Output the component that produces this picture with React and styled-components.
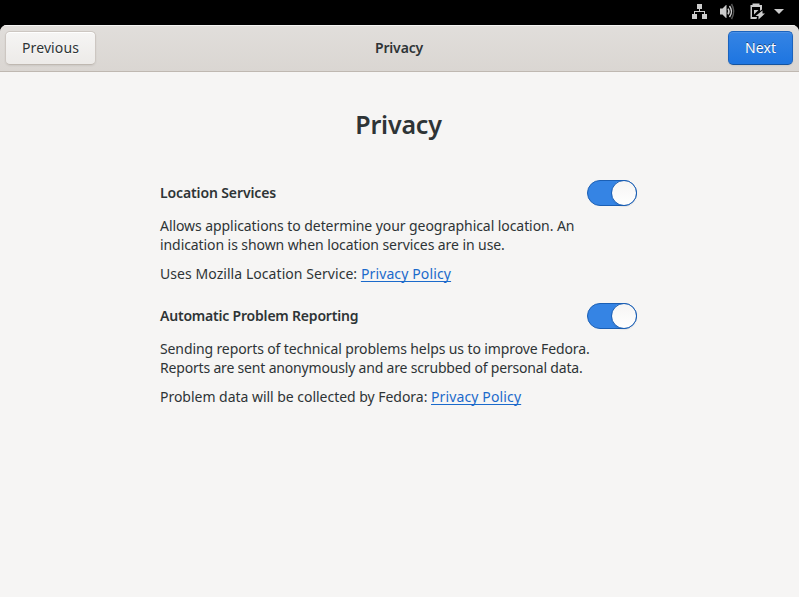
import React from 'react';
import styled, { createGlobalStyle } from 'styled-components';

const GlobalStyle = createGlobalStyle`
  * { box-sizing: border-box; }
  body {
    margin: 0;
    background: #000;
    color: #2e3436;
    font: 14px/19px "Noto Sans", "Open Sans", sans-serif;
  }
`;

const Screen = styled.div`
  display: flex;
  flex-direction: column;
  height: 597px;
  overflow: hidden;
`;

const TopBar = styled.div`
  display: flex;
  justify-content: flex-end;
  height: 25px;
  flex: none;
  background: #000;
`;

const StatusIcons = styled.svg`
  display: block;
  fill: #ccc;
`;

const Window = styled.main`
  flex: 1;
  display: flex;
  flex-direction: column;
  border-radius: 7px 7px 0 0;
  overflow: hidden;
  background: #f6f5f4;
`;

const HeaderBar = styled.header`
  display: grid;
  grid-template-columns: 1fr auto 1fr;
  align-items: center;
  height: 47px;
  padding: 0 6px 0 5px;
  border-bottom: 1px solid #bfb8b1;
  background: linear-gradient(to top, #dad6d2, #e1dedb);
  box-shadow: inset 0 1px #f5f4f3;
`;

const HeaderTitle = styled.div`
  padding-bottom: 2px;
  font-weight: 600;
  letter-spacing: -0.15px;
`;

const Button = styled.button`
  height: 34px;
  width: ${(p) => (p.$suggested ? 65 : 91)}px;
  justify-self: ${(p) => (p.$suggested ? 'end' : 'start')};
  padding: 0 0 2px;
  border: 1px solid ${(p) => (p.$suggested ? '#1b63bd' : '#cdc7c2')};
  border-bottom-color: ${(p) => (p.$suggested ? '#15539e' : '#bfb8b1')};
  border-radius: 5px;
  background: ${(p) =>
    p.$suggested
      ? 'linear-gradient(to top, #1f76e1 2px, #3584e4)'
      : 'linear-gradient(to top, #edebe9 2px, #f6f5f4)'};
  box-shadow: inset 0 1px ${(p) => (p.$suggested ? '#4b91e7' : '#fff')},
    0 1px 2px rgba(0, 0, 0, 0.07);
  color: ${(p) => (p.$suggested ? '#fff' : '#2e3436')};
  text-shadow: ${(p) =>
    p.$suggested ? '0 -1px rgba(0, 0, 0, 0.45)' : '0 1px rgba(255, 255, 255, 0.77)'};
  font: inherit;
  letter-spacing: 0.1px;
`;

const Content = styled.section`
  width: 477px;
  margin-left: 160px;
`;

const PageTitle = styled.h1`
  margin: 34px 0 0;
  font-size: 25px;
  line-height: 36px;
  font-weight: 600;
  letter-spacing: -0.2px;
  text-align: center;
`;

const Setting = styled.section`
  margin-top: ${(p) => p.$gap}px;
`;

const SettingHeader = styled.div`
  display: flex;
  align-items: center;
  justify-content: space-between;
  height: 26px;
`;

const SettingTitle = styled.h2`
  margin: 0;
  padding-bottom: 2px;
  font-size: 14px;
  font-weight: 600;
  letter-spacing: ${(p) => p.$tracking}px;
`;

const Description = styled.p`
  margin: 10px 0 0;
`;

const Line = styled.span`
  display: block;
  white-space: nowrap;
  letter-spacing: ${(p) => p.$tracking}px;
`;

const Note = styled.p`
  margin: 10px 0 0;
  letter-spacing: ${(p) => p.$tracking}px;
  white-space: nowrap;
`;

const Link = styled.a`
  color: #1b6acb;
  letter-spacing: 0.13px;
  text-decoration: underline;
  text-decoration-thickness: 1px;
  text-decoration-skip-ink: none;
  text-underline-offset: 2px;
`;

const Switch = styled.button`
  display: flex;
  justify-content: flex-end;
  width: 50px;
  height: 26px;
  padding: 0;
  border: 1px solid #1b5fb4;
  border-radius: 13px;
  background: #3584e4;
`;

const Knob = styled.span`
  width: 26px;
  height: 26px;
  margin: -1px -1px 0 0;
  border: 1px solid #1b5fb4;
  border-radius: 50%;
  background: linear-gradient(to bottom, #f6f5f4, #fff);
  box-shadow: 0 1px 1px rgba(0, 0, 0, 0.08);
`;

const Toggle = ({ label }) => (
  <Switch role="switch" aria-checked="true" aria-label={label}>
    <Knob />
  </Switch>
);

export default function App() {
  return (
    <Screen>
      <GlobalStyle />
      <TopBar>
        <StatusIcons width="111" height="25" viewBox="688 0 111 25" aria-hidden="true">
          <path d="M697 4h5v5h-2v2h5v3h2v5h-5v-5h2v-2h-9v2h2v5h-5v-5h2v-3h5V9h-2z" />
          <path d="M720 8.5h2.5L726 5h.5v13H726l-3.5-3.5H720z" />
          <g fill="none" stroke="#ccc" strokeWidth="1.5">
            <path d="M728 8.6q2 2.9 0 5.8" />
            <path d="M729.5 6q4 5.5 0 11" />
            <path d="M731.5 4q4.4 7.5 0 15" stroke="#555" />
          </g>
          <path d="M752.5 3.5h7V5h2.5v4.5l-2 1.5V7h-8v10h5l-.5 2h-6V5h2z" />
          <path d="M754 10h4.5l-4.5 4.5z" />
          <path d="M762.5 10.5V13.5h2.5L758.5 19.5v-3.5h-3z" />
          <path d="M774 9h10l-5 5z" />
        </StatusIcons>
      </TopBar>
      <Window>
        <HeaderBar>
          <Button>Previous</Button>
          <HeaderTitle>Privacy</HeaderTitle>
          <Button $suggested>Next</Button>
        </HeaderBar>
        <Content>
          <PageTitle>Privacy</PageTitle>
          <Setting $gap={38}>
            <SettingHeader>
              <SettingTitle $tracking={-0.12}>Location Services</SettingTitle>
              <Toggle label="Location Services" />
            </SettingHeader>
            <Description>
              <Line $tracking={-0.07}>Allows applications to determine your geographical location. An</Line>
              <Line $tracking={-0.08}>indication is shown when location services are in use.</Line>
            </Description>
            <Note $tracking={0.06}>
              Uses Mozilla Location Service: <Link href="#">Privacy Policy</Link>
            </Note>
          </Setting>
          <Setting $gap={20}>
            <SettingHeader>
              <SettingTitle $tracking={-0.2}>Automatic Problem Reporting</SettingTitle>
              <Toggle label="Automatic Problem Reporting" />
            </SettingHeader>
            <Description>
              <Line $tracking={-0.11}>Sending reports of technical problems helps us to improve Fedora.</Line>
              <Line $tracking={-0.18}>Reports are sent anonymously and are scrubbed of personal data.</Line>
            </Description>
            <Note $tracking={-0.03}>
              Problem data will be collected by Fedora: <Link href="#">Privacy Policy</Link>
            </Note>
          </Setting>
        </Content>
      </Window>
    </Screen>
  );
}
